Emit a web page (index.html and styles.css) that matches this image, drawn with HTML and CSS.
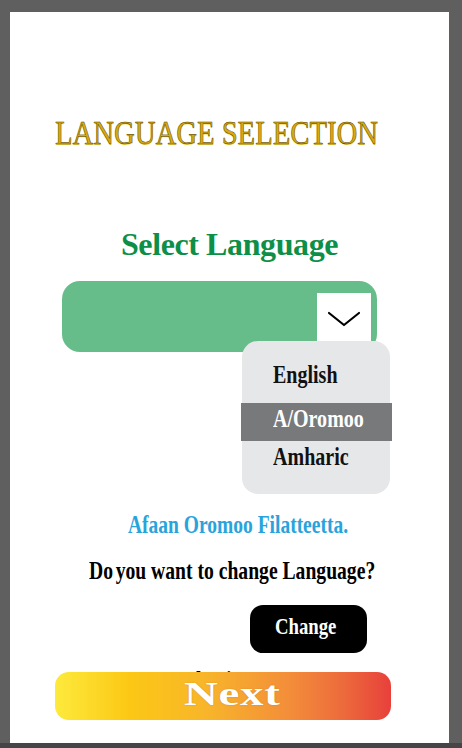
FILE: index.html
```html
<!DOCTYPE html>
<html lang="en">
<head>
<meta charset="utf-8">
<title>Language Selection</title>
<link rel="stylesheet" href="styles.css">
</head>
<body>
<div class="frame">
  <main class="panel">
    <h1 class="title"><span class="title-text">LANGUAGE SELECTION</span></h1>
    <h2 class="subtitle">Select Language</h2>
    <div class="select">
      <div class="select-btn">
        <svg width="34" height="18" viewBox="0 0 34 18" aria-hidden="true"><path d="M2 3 L17 15 L32 3" fill="none" stroke="#000" stroke-width="2.2" stroke-linecap="round" stroke-linejoin="round"/></svg>
      </div>
    </div>
    <ul class="menu">
      <li class="item"><span class="cond">English</span></li>
      <li class="item active"><span class="cond">A/Oromoo</span></li>
      <li class="item"><span class="cond">Amharic</span></li>
    </ul>
    <p class="current"><span class="cond">Afaan Oromoo Filatteetta.</span></p>
    <p class="question"><span class="cond"><span class="tight">Do</span> you want to change Language?</span></p>
    <button class="change"><span class="cond">Change</span></button>
    <p class="hidden-lang"><span class="cond">Amharic</span></p>
    <button class="next"><span class="next-text">Next</span></button>
  </main>
</div>
</body>
</html>
```

FILE: styles.css
```css
* { box-sizing: border-box; }
html, body { margin: 0; padding: 0; }
body {
  background: #454545;
  width: 462px;
  height: 748px;
  overflow: hidden;
  font-family: "Liberation Serif", "Times New Roman", serif;
}
.frame {
  background: #5f5f5f;
  height: 743px;
  padding: 12px 13px 0 10px;
}
.panel {
  background: #ffffff;
  width: 439px;
  height: 731px;
  padding-top: 101px;
  display: flex;
  flex-direction: column;
  align-items: flex-start;
}
.title {
  margin: 0 0 0 45px;
  font-size: 33px;
  line-height: 40px;
  height: 40px;
  font-weight: normal;
  white-space: nowrap;
}
.title-text {
  display: inline-block;
  transform: scaleX(0.87);
  transform-origin: left center;
  color: #d6aa12;
  -webkit-text-stroke: 0.45px #4a3600;
  text-shadow: 0.5px 0.5px 0 #f3d64a;
}
.subtitle {
  margin: 71px 0 0 0;
  align-self: stretch;
  text-align: center;
  font-size: 32px;
  line-height: 40px;
  height: 40px;
  font-weight: bold;
  color: #0d8f48;
  letter-spacing: -0.4px;
}
.select {
  margin: 17px 0 0 52px;
  width: 315px;
  height: 71px;
  background: #66bd8a;
  border-radius: 18px;
  padding: 12px 6px 10px 0;
  display: flex;
  justify-content: flex-end;
}
.select-btn {
  width: 54px;
  height: 49px;
  background: #ffffff;
  display: flex;
  align-items: center;
  justify-content: center;
  padding-top: 2px;
}
.menu {
  position: relative;
  z-index: 1;
  list-style: none;
  margin: -11px 0 0 232px;
  padding: 18px 0 15px 0;
  width: 148px;
  height: 153px;
  background: #e6e7e9;
  border-radius: 16px;
}
.item {
  height: 38px;
  line-height: 31px;
  font-size: 26px;
  font-weight: bold;
  color: #111;
  padding-left: 31px;
  white-space: nowrap;
}
.item:first-child { margin-bottom: 6px; }
.item.active {
  background: #78797b;
  color: #ffffff;
  margin: 0 -2px 0 -1px;
  padding-left: 32px;
}
.cond {
  display: inline-block;
  transform: scaleX(0.77);
  transform-origin: left center;
  white-space: nowrap;
}
.current {
  margin: 16px 0 0 118px;
  font-size: 25px;
  line-height: 30px;
  height: 30px;
  font-weight: bold;
  color: #29a3dc;
}
.current .cond { transform: scaleX(0.78); }
.question {
  margin: 16px 0 0 79px;
  font-size: 26px;
  line-height: 30px;
  height: 30px;
  font-weight: bold;
  color: #000;
}
.question .cond { transform: scaleX(0.755); }
.tight { margin-right: -3px; }
.change {
  margin: 19px 0 0 240px;
  width: 117px;
  height: 48px;
  border: none;
  border-radius: 13px;
  background: #000;
  color: #fff;
  font-family: "Liberation Serif", "Times New Roman", serif;
  font-size: 24px;
  font-weight: bold;
  line-height: 42px;
  padding: 0 0 6px 25px;
  text-align: left;
}
.change .cond { transform: scaleX(0.78); }
.hidden-lang {
  margin: 13px 0 0 155px;
  font-size: 25px;
  line-height: 30px;
  height: 30px;
  font-weight: bold;
  color: #000;
}
.hidden-lang .cond { transform: scaleX(0.8); }
.next {
  position: relative;
  z-index: 1;
  margin: -24px 0 0 45px;
  width: 336px;
  height: 48px;
  border: none;
  border-radius: 14px;
  background: linear-gradient(to right, #fdea3c 0%, #fcc815 22%, #f8b52a 45%, #f38d3a 70%, #ec6a3c 86%, #e8403b 100%);
  color: #fff;
  font-family: "Liberation Serif", "Times New Roman", serif;
  font-size: 33px;
  font-weight: bold;
  line-height: 44px;
  padding: 0 0 4px 0;
  text-align: left;
}
.next-text {
  display: inline-block;
  margin-left: 129px;
  transform: scaleX(1.42);
  transform-origin: left center;
  letter-spacing: 0.5px;
  text-shadow: 0 0 1px rgba(120, 60, 0, 0.4);
}
```
